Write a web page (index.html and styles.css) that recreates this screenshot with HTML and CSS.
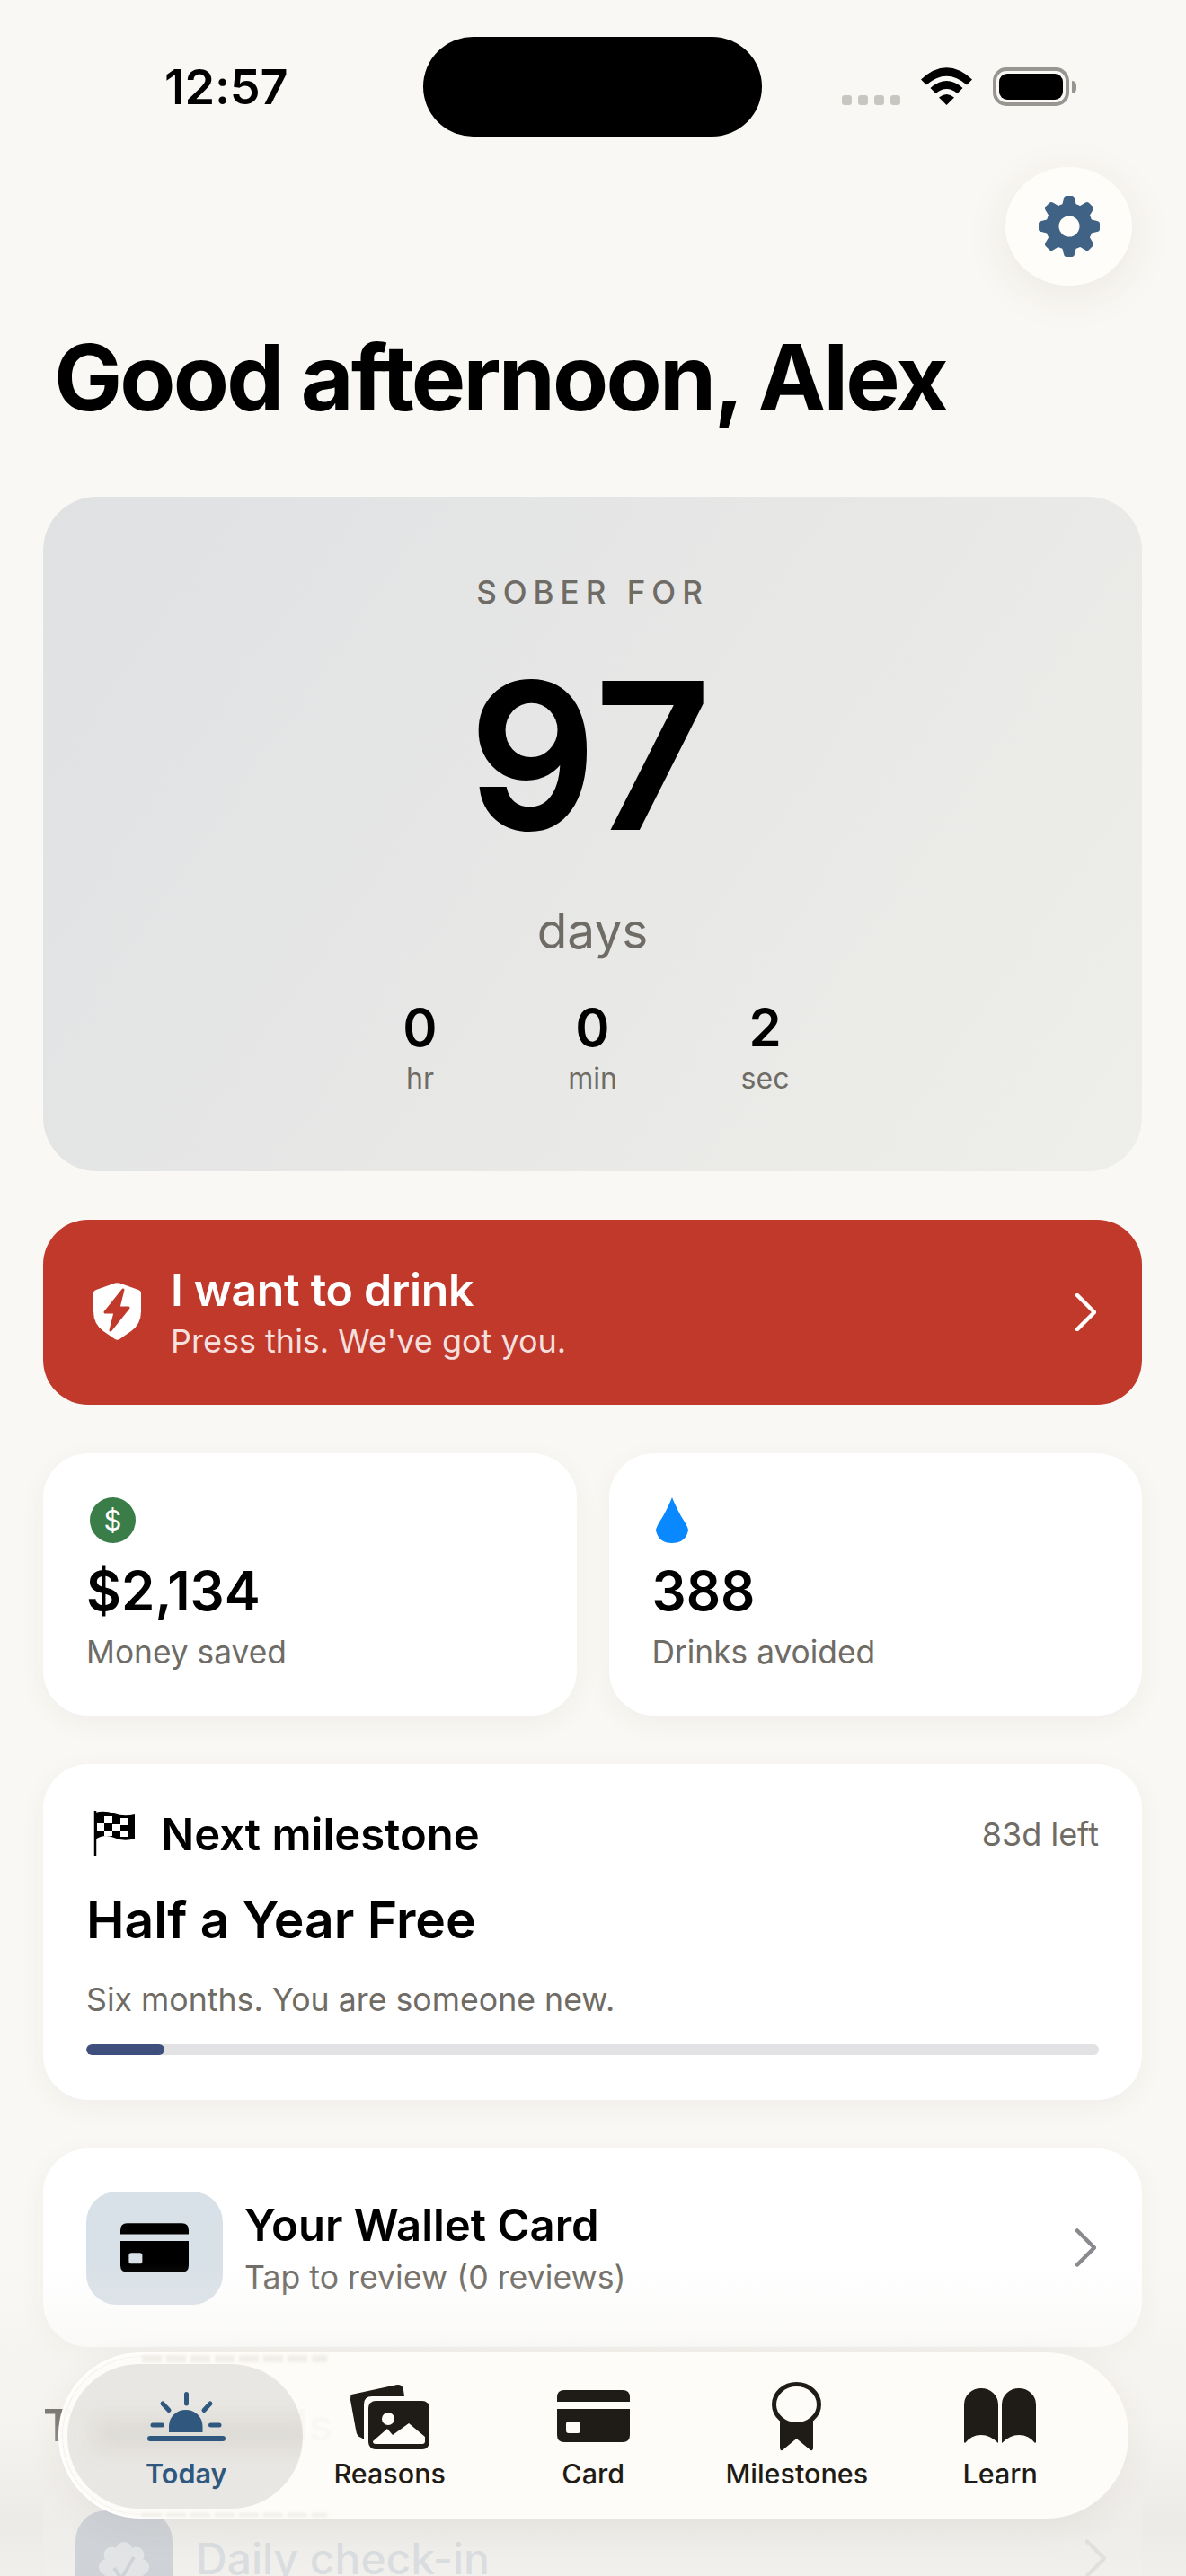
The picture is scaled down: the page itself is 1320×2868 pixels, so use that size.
FILE: index.html
```html
<!DOCTYPE html>
<html lang="en">
<head>
    <meta charset="UTF-8">
    <meta name="viewport" content="width=device-width, initial-scale=1.0">
    <title>Today</title>
    <link rel="stylesheet" href="styles.css">
</head>
<body>
<div class="page">

    <div class="status-bar">
        <div class="clock">12:57</div>
        <div class="island"></div>
        <div class="status-icons">
            <div class="signal"><span></span><span></span><span></span><span></span></div>
            <svg class="wifi" width="57" height="42" viewBox="0 0 57 42">
                <path d="M0 13.5Q28.5-13 57 13.5L51 19.5Q28.5 0 6 19.5Z"/>
                <path d="M10.5 23Q28.5 7 46.5 23L40.5 29Q28.5 19 16.5 29Z"/>
                <path d="M20 33.5Q28.5 26.5 37 33.5L28.5 42Z"/>
            </svg>
            <div class="battery"><div class="battery-level"></div></div>
            <div class="battery-cap"></div>
        </div>
    </div>

    <div class="top-row">
        <div class="settings-btn">
            <svg width="68" height="68" viewBox="-34 -34 68 68" fill="#3f6285">
                <circle r="26"/>
                <path d="M-8-23L-6-31Q-5.5-34-3-34H3Q5.5-34 6-31L8-23Z"/>
                <path d="M-8-23L-6-31Q-5.5-34-3-34H3Q5.5-34 6-31L8-23Z" transform="rotate(45)"/>
                <path d="M-8-23L-6-31Q-5.5-34-3-34H3Q5.5-34 6-31L8-23Z" transform="rotate(90)"/>
                <path d="M-8-23L-6-31Q-5.5-34-3-34H3Q5.5-34 6-31L8-23Z" transform="rotate(135)"/>
                <path d="M-8-23L-6-31Q-5.5-34-3-34H3Q5.5-34 6-31L8-23Z" transform="rotate(180)"/>
                <path d="M-8-23L-6-31Q-5.5-34-3-34H3Q5.5-34 6-31L8-23Z" transform="rotate(225)"/>
                <path d="M-8-23L-6-31Q-5.5-34-3-34H3Q5.5-34 6-31L8-23Z" transform="rotate(270)"/>
                <path d="M-8-23L-6-31Q-5.5-34-3-34H3Q5.5-34 6-31L8-23Z" transform="rotate(315)"/>
                <circle r="11.5" fill="#fffdf9"/>
            </svg>
        </div>
    </div>

    <h1 class="greeting">Good afternoon, Alex</h1>

    <div class="content">

        <section class="hero">
            <div class="hero-label">SOBER FOR</div>
            <div class="hero-number">97</div>
            <div class="hero-unit">days</div>
            <div class="timer">
                <div class="timer-cell"><div class="timer-value">0</div><div class="timer-label">hr</div></div>
                <div class="timer-cell"><div class="timer-value">0</div><div class="timer-label">min</div></div>
                <div class="timer-cell"><div class="timer-value">2</div><div class="timer-label">sec</div></div>
            </div>
        </section>

        <section class="urge-btn">
            <svg class="urge-icon" width="53" height="64" viewBox="0 0 53 64">
                <path fill="#fff" d="M24 .6Q26.5-.2 29 .6L50 8Q53 9 53 12V32Q53 46 42 54L29 63Q26.5 64.5 24 63L11 54Q0 46 0 32V12Q0 9 3 8Z"/>
                <path fill="#c0392b" stroke="#c0392b" stroke-width="3" stroke-linejoin="round" d="M33 8L13 33H24L19 53L39 28H28Z"/>
            </svg>
            <div class="urge-text">
                <div class="urge-title">I want to drink</div>
                <div class="urge-sub">Press this. We've got you.</div>
            </div>
            <svg class="chevron" width="23" height="42" viewBox="0 0 23 42" stroke="#fff"><path d="M2 2L21 21L2 40"/></svg>
        </section>

        <div class="stats">
            <section class="card stat-card">
                <div class="stat-icon"><span class="dollar">$</span></div>
                <div class="stat-value">$2,134</div>
                <div class="stat-label">Money saved</div>
            </section>
            <section class="card stat-card">
                <div class="stat-icon">
                    <svg class="drop" width="36" height="51" viewBox="0 0 36 51"><path fill="#0a88ff" d="M18 0Q21 8 28 21Q36 33 36 37Q33 51 18 51Q3 51 0 37Q0 33 8 21Q15 8 18 0Z"/></svg>
                </div>
                <div class="stat-value">388</div>
                <div class="stat-label">Drinks avoided</div>
            </section>
        </div>

        <section class="card milestone">
            <div class="milestone-head">
                <svg class="flag" width="46" height="50" viewBox="0 0 46 50">
                    <path fill="none" stroke="#000" stroke-width="2.5" d="M2 0V50"/>
                    <path fill="#000" d="M2 2Q12-1 23 3T46 4V31Q34 35 23 30T2 32Z"/>
                    <g fill="#fff">
                        <rect x="12" y="6" width="9" height="8"/><rect x="30" y="8" width="9" height="8"/>
                        <rect x="4" y="14" width="8" height="8"/><rect x="21" y="15" width="9" height="7"/>
                        <rect x="12" y="22" width="9" height="6"/><rect x="30" y="22" width="9" height="7"/>
                    </g>
                </svg>
                <div class="milestone-title">Next milestone</div>
                <div class="milestone-left">83d left</div>
            </div>
            <div class="milestone-name">Half a Year Free</div>
            <div class="milestone-desc">Six months. You are someone new.</div>
            <div class="progress"><div class="progress-fill" style="width: 7.7%"></div></div>
        </section>

        <section class="card row-card">
            <div class="row-icon wallet-icon">
                <svg width="76" height="55" viewBox="0 0 81 58" fill="#000">
                    <path d="M0 13V8Q0 0 8 0H73Q81 0 81 8V13Z"/>
                    <path fill-rule="evenodd" d="M0 21H81V50Q81 58 73 58H8Q0 58 0 50ZM13 35Q10 35 10 38V45Q10 48 13 48H23Q26 48 26 45V38Q26 35 23 35Z"/>
                </svg>
            </div>
            <div class="row-text">
                <div class="row-title">Your Wallet Card</div>
                <div class="row-sub">Tap to review (0 reviews)</div>
            </div>
            <svg class="chevron" width="23" height="43" viewBox="0 0 23 42" stroke="#8a8a8e"><path d="M2 2L21 21L2 40"/></svg>
        </section>

        <h2 class="section-title">Today's tools</h2>

        <section class="card row-card checkin">
            <div class="row-icon checkin-icon">
                <svg width="56" height="60" viewBox="-28 -30 56 60">
                    <g fill="#e3e4e5">
                        <circle r="22"/>
                        <circle cy="-19" r="9"/><circle cx="13.5" cy="-13.5" r="9"/><circle cx="19" r="9"/><circle cx="13.5" cy="13.5" r="9"/>
                        <circle cy="19" r="9"/><circle cx="-13.5" cy="13.5" r="9"/><circle cx="-19" r="9"/><circle cx="-13.5" cy="-13.5" r="9"/>
                    </g>
                    <path fill="none" stroke="#cfd3d7" stroke-width="4" d="M-11 1L-3 13L11-11"/>
                </svg>
            </div>
            <div class="row-text">
                <div class="row-title">Daily check-in</div>
            </div>
            <svg class="chevron" width="23" height="43" viewBox="0 0 23 42" stroke="#e0e0df"><path d="M2 2L21 21L2 40"/></svg>
        </section>
    </div>

    <!-- fade over content scrolling under the tab bar -->
    <div class="scroll-fade"></div>

    <nav class="tab-bar">
        <div class="refraction refraction-top"></div>
        <div class="refraction refraction-bottom"></div>
        <div class="tab-rim"></div>
        <div class="tab-rim tab-rim-inner"></div>
        <div class="tab-pill"><div class="pill-smudge"></div></div>

        <div class="tab tab-active">
            <div class="tab-icon">
                <svg width="87" height="55" viewBox="0 0 87 55">
                    <rect y="49" width="87" height="6" rx="3" fill="#30587f"/>
                    <path fill="#30587f" d="M24 45V38A18.7 18 0 0 1 61.5 38V45Z"/>
                    <path fill="none" stroke="#30587f" stroke-width="5" stroke-linecap="round" d="M43.5 2.5V13M17 13L24 20.500M70 13L63 20.500M6 37H16.500M70.500 37H80"/>
                </svg>
            </div>
            <div class="tab-label">Today</div>
        </div>

        <div class="tab">
            <div class="tab-icon">
                <svg width="88" height="73" viewBox="0 0 88 73">
                    <path fill="#1f1c17" d="M1 12L52 1Q58 0 59 7L60 14H24Q15 14 15 23V62L12 60Q7 59 6 51L0 18Q0 13 1 12Z"/>
                    <rect x="20" y="19" width="68" height="54" rx="8" fill="#1f1c17"/>
                    <path fill="#fffdf9" d="M25 64L41 50L47 57L65 44L83 59V64Q83 67 80 67H28Q25 67 25 64Z"/>
                    <ellipse cx="42" cy="39" rx="7" ry="7" fill="#fffdf9"/>
                </svg>
            </div>
            <div class="tab-label">Reasons</div>
        </div>

        <div class="tab">
            <div class="tab-icon">
                <svg width="81" height="58" viewBox="0 0 81 58" fill="#1f1c17">
                    <path d="M0 13V8Q0 0 8 0H73Q81 0 81 8V13Z"/>
                    <path fill-rule="evenodd" d="M0 21H81V50Q81 58 73 58H8Q0 58 0 50ZM13 35Q10 35 10 38V45Q10 48 13 48H23Q26 48 26 45V38Q26 35 23 35Z"/>
                </svg>
            </div>
            <div class="tab-label">Card</div>
        </div>

        <div class="tab">
            <div class="tab-icon">
                <svg width="55" height="77" viewBox="0 0 55 77">
                    <ellipse cx="27.500" cy="25" rx="25" ry="22.500" fill="none" stroke="#1f1c17" stroke-width="5"/>
                    <path fill="#1f1c17" d="M9 43Q27.500 54 46 43V74Q45 78 42 75L27.500 63L13 75Q10 78 9 74Z"/>
                </svg>
            </div>
            <div class="tab-label">Milestones</div>
        </div>

        <div class="tab">
            <div class="tab-icon">
                <svg width="80" height="62" viewBox="0 0 80 62" fill="#1f1c17">
                    <path d="M0 18A19 18 0 0 1 38 18V61Q29 52 19 52Q8 52 1 61L0 60Z"/>
                    <path d="M42 18A19 18 0 0 1 80 18V60L79 61Q72 52 61 52Q51 52 42 61Z"/>
                </svg>
            </div>
            <div class="tab-label">Learn</div>
        </div>
    </nav>
</div>
</body>
</html>
```

FILE: styles.css
```css
* {
    box-sizing: border-box;
}

body {
    margin: 0;
    background-color: #faf8f4;
    font-family: Inter, "Noto Sans", sans-serif;
    color: #000;
}

.page {
    position: relative;
    width: 1320px;
    height: 2868px;
    overflow: hidden;
}

/* status bar */
.status-bar {
    display: flex;
    align-items: flex-start;
    height: 152px;
    padding: 41px 0 0 183px;
}

.clock {
    width: 288px;
    margin-top: 26px;
    font-size: 54px;
    line-height: 60px;
    font-weight: 600;
    letter-spacing: -0.3px;
}

.island {
    width: 377px;
    height: 111px;
    background-color: #000;
    border-radius: 56px;
}

.status-icons {
    display: flex;
    align-items: flex-end;
    margin-top: 34px;
    margin-left: 89px;
}

.signal {
    display: flex;
    gap: 7px;
    margin-right: 23px;
    margin-bottom: 1px;
}

.signal span {
    width: 11px;
    height: 11px;
    background-color: #c8c6c1;
    border-radius: 3px;
}

.wifi {
    margin-right: 23px;
    margin-bottom: 1px;
}

.battery {
    width: 85px;
    height: 43px;
    padding: 3px;
    border: 4px solid #989690;
    border-radius: 15px;
}

.battery-level {
    width: 100%;
    height: 100%;
    background-color: #000;
    border-radius: 9px;
}

.battery-cap {
    width: 5px;
    height: 14px;
    margin-left: 3px;
    margin-bottom: 14px;
    background-color: #989690;
    border-radius: 0 5px 5px 0;
}

/* top */
.top-row {
    display: flex;
    justify-content: flex-end;
    padding: 34px 60px 0 0;
}

.settings-btn {
    display: flex;
    align-items: center;
    justify-content: center;
    width: 141px;
    height: 132px;
    background-color: #fffdf9;
    border-radius: 50%;
    box-shadow: 0 10px 50px rgba(60, 50, 40, 0.08);
}

.greeting {
    margin: 46px 0 0 60px;
    font-size: 101.500px;
    line-height: 112px;
    font-weight: 700;
    letter-spacing: -2.8px;
}

.content {
    display: flex;
    flex-direction: column;
    gap: 54px;
    padding: 0 49px 0 48px;
    margin-top: 77px;
}

/* hero */
.hero {
    display: flex;
    flex-direction: column;
    align-items: center;
    height: 751px;
    padding-top: 84px;
    background: linear-gradient(125deg, #dfe1e3 0%, #e7e7e6 50%, #eeeeea 100%);
    border-radius: 60px;
}

.hero-label {
    font-size: 35px;
    line-height: 44px;
    font-weight: 500;
    letter-spacing: 7px;
    color: #6f6b65;
}

.hero-number {
    margin-top: 45px;
    font-size: 220px;
    line-height: 230px;
    font-weight: 500;
    letter-spacing: 6px;
    -webkit-text-stroke: 6px #000;
}

.hero-unit {
    margin-top: 45px;
    font-size: 55px;
    line-height: 70px;
    color: #6f6b65;
}

.timer {
    display: flex;
    margin-top: 38px;
}

.timer-cell {
    width: 192px;
    text-align: center;
}

.timer-value {
    font-size: 58px;
    line-height: 70px;
    font-weight: 600;
}

.timer-label {
    margin-top: 3px;
    font-size: 32px;
    line-height: 38px;
    color: #6f6b65;
}

/* urge button */
.urge-btn {
    display: flex;
    align-items: center;
    height: 206px;
    padding: 0 51px 0 56px;
    background-color: #c0392b;
    border-radius: 50px;
    color: #fff;
}

.urge-icon {
    margin-right: 33px;
    margin-top: -2px;
}

.urge-text {
    flex: 1;
    margin-top: -2px;
}

.urge-title {
    font-size: 50px;
    line-height: 62px;
    font-weight: 600;
    letter-spacing: -0.3px;
}

.urge-sub {
    margin-top: 4px;
    font-size: 36px;
    line-height: 44px;
    color: rgba(255, 255, 255, 0.85);
}

.chevron {
    fill: none;
    stroke-width: 4.5;
    stroke-linecap: round;
    stroke-linejoin: round;
    flex-shrink: 0;
}

/* cards */
.card {
    background-color: #fff;
    border-radius: 50px;
    box-shadow: 0 8px 30px rgba(60, 50, 40, 0.05);
}

.stats {
    display: grid;
    grid-template-columns: 1fr 1fr;
    gap: 36px;
}

.stat-card {
    height: 292px;
    padding: 49px 48px 0 48px;
}

.stat-icon {
    display: flex;
    align-items: center;
    height: 51px;
}

.drop {
    margin-left: 4px;
}

.dollar {
    display: flex;
    align-items: center;
    justify-content: center;
    width: 51px;
    height: 51px;
    margin-left: 4px;
    background-color: #3a7d48;
    border-radius: 50%;
    color: #fff;
    font-size: 31px;
}

.stat-value {
    margin-top: 18px;
    font-size: 60px;
    line-height: 70px;
    font-weight: 600;
}

.stat-label {
    margin-top: 12px;
    font-size: 35.300px;
    line-height: 44px;
    color: #6f6b65;
}

/* milestone */
.milestone {
    height: 374px;
    padding: 51px 48px 0 48px;
}

.milestone-head {
    display: flex;
    align-items: center;
    height: 56px;
}

.flag {
    margin-left: 8px;
    margin-right: 29px;
    margin-top: -4px;
}

.milestone-title {
    flex: 1;
    font-size: 49px;
    line-height: 56px;
    font-weight: 600;
}

.milestone-left {
    font-size: 36px;
    color: #6f6b65;
    margin-top: -2px;
}

.milestone-name {
    margin-top: 32px;
    font-size: 57px;
    line-height: 70px;
    font-weight: 600;
}

.milestone-desc {
    margin-top: 31px;
    font-size: 35.700px;
    line-height: 44px;
    color: #6f6b65;
}

.progress {
    height: 12px;
    margin-top: 28px;
    background-color: #e2e2e4;
    border-radius: 6px;
    overflow: hidden;
}

.progress-fill {
    height: 100%;
    background-color: #3f4f7d;
    border-radius: 6px;
}

/* rows */
.row-card {
    display: flex;
    align-items: center;
    height: 221px;
    padding: 0 51px 0 48px;
}

.row-icon {
    display: flex;
    align-items: center;
    justify-content: center;
    flex-shrink: 0;
    width: 152px;
    height: 126px;
    margin-right: 24px;
    border-radius: 34px;
}

.wallet-icon {
    background-color: #d9e1e8;
}

.row-text {
    flex: 1;
}

.row-title {
    font-size: 49px;
    line-height: 60px;
    font-weight: 600;
}

.row-sub {
    margin-top: 4px;
    font-size: 35.700px;
    line-height: 46px;
    color: #6f6b65;
}

.section-title {
    margin: 3px 0 0 0;
    font-size: 50px;
    line-height: 60px;
    font-weight: 600;
    color: #1f1c17;
}

.checkin {
    position: relative;
    z-index: 2;
    align-items: flex-start;
    margin-top: -34px;
    padding: 45px 40px 0 36px;
    background-color: rgba(255, 255, 255, 0.1);
    box-shadow: none;
}

.checkin-icon {
    width: 108px;
    margin-right: 26px;
    background-color: #cfd3d7;
}

.checkin .row-title {
    margin-top: 24px;
    font-size: 48px;
    font-weight: 500;
    color: #dadde0;
}

.checkin .chevron {
    margin-top: 32px;
}

.scroll-fade {
    position: absolute;
    left: 0;
    right: 0;
    top: 2520px;
    height: 348px;
    background: linear-gradient(to bottom,
        rgba(240, 238, 234, 0) 0%,
        rgba(240, 238, 234, 0.35) 27%,
        rgba(240, 238, 234, 0.48) 52%,
        rgba(236, 234, 230, 0.95) 84%,
        rgba(240, 238, 234, 0.9) 100%);
}

/* tab bar */
.tab-bar {
    position: absolute;
    z-index: 3;
    left: 65px;
    top: 2619px;
    display: flex;
    width: 1191px;
    height: 185px;
    padding: 0 29px;
    background-color: rgba(254, 252, 248, 0.97);
    border-radius: 92px;
    box-shadow: 0 10px 40px rgba(60, 50, 40, 0.06);
    overflow: hidden;
}

.tab-pill {
    position: absolute;
    left: 10px;
    top: 13px;
    width: 262px;
    height: 161px;
    background-color: #e9e7e3;
    border-radius: 80px;
    overflow: hidden;
}

.pill-smudge {
    position: absolute;
    left: 30px;
    right: -10px;
    top: 62px;
    height: 32px;
    background-color: rgba(120, 110, 100, 0.1);
    filter: blur(12px);
}

/* bright lens edge on the left of the selected tab */
.tab-rim {
    position: absolute;
    left: 0;
    top: 0;
    width: 290px;
    height: 185px;
    border: 2px solid #fff;
    border-radius: 92px;
    -webkit-mask-image: linear-gradient(to right, #000 15%, transparent 50%);
    mask-image: linear-gradient(to right, #000 15%, transparent 50%);
}

.tab-rim-inner {
    left: 4px;
    top: 4px;
    width: 280px;
    height: 177px;
    border: 1px solid #f0eee9;
    border-radius: 88px;
}

/* text behind the bar shows as faint streaks along its edges */
.refraction {
    position: absolute;
    left: 93px;
    width: 206px;
    background: repeating-linear-gradient(to right, rgba(120, 115, 110, 0.1) 0 22px, transparent 22px 27px);
    filter: blur(1.5px);
}

.refraction-top {
    top: 3px;
    height: 8px;
}

.refraction-bottom {
    bottom: 2px;
    height: 4px;
}

.tab {
    position: relative;
    display: flex;
    flex-direction: column;
    align-items: center;
    width: 226.500px;
}

.tab-icon {
    display: flex;
    align-items: center;
    justify-content: center;
    height: 78px;
    margin-top: 32px;
}

.tab-label {
    margin-top: 5px;
    font-size: 30.500px;
    line-height: 40px;
    font-weight: 500;
    color: #1f1c17;
}

.tab-active .tab-label {
    color: #30587f;
    font-weight: 600;
}
```
